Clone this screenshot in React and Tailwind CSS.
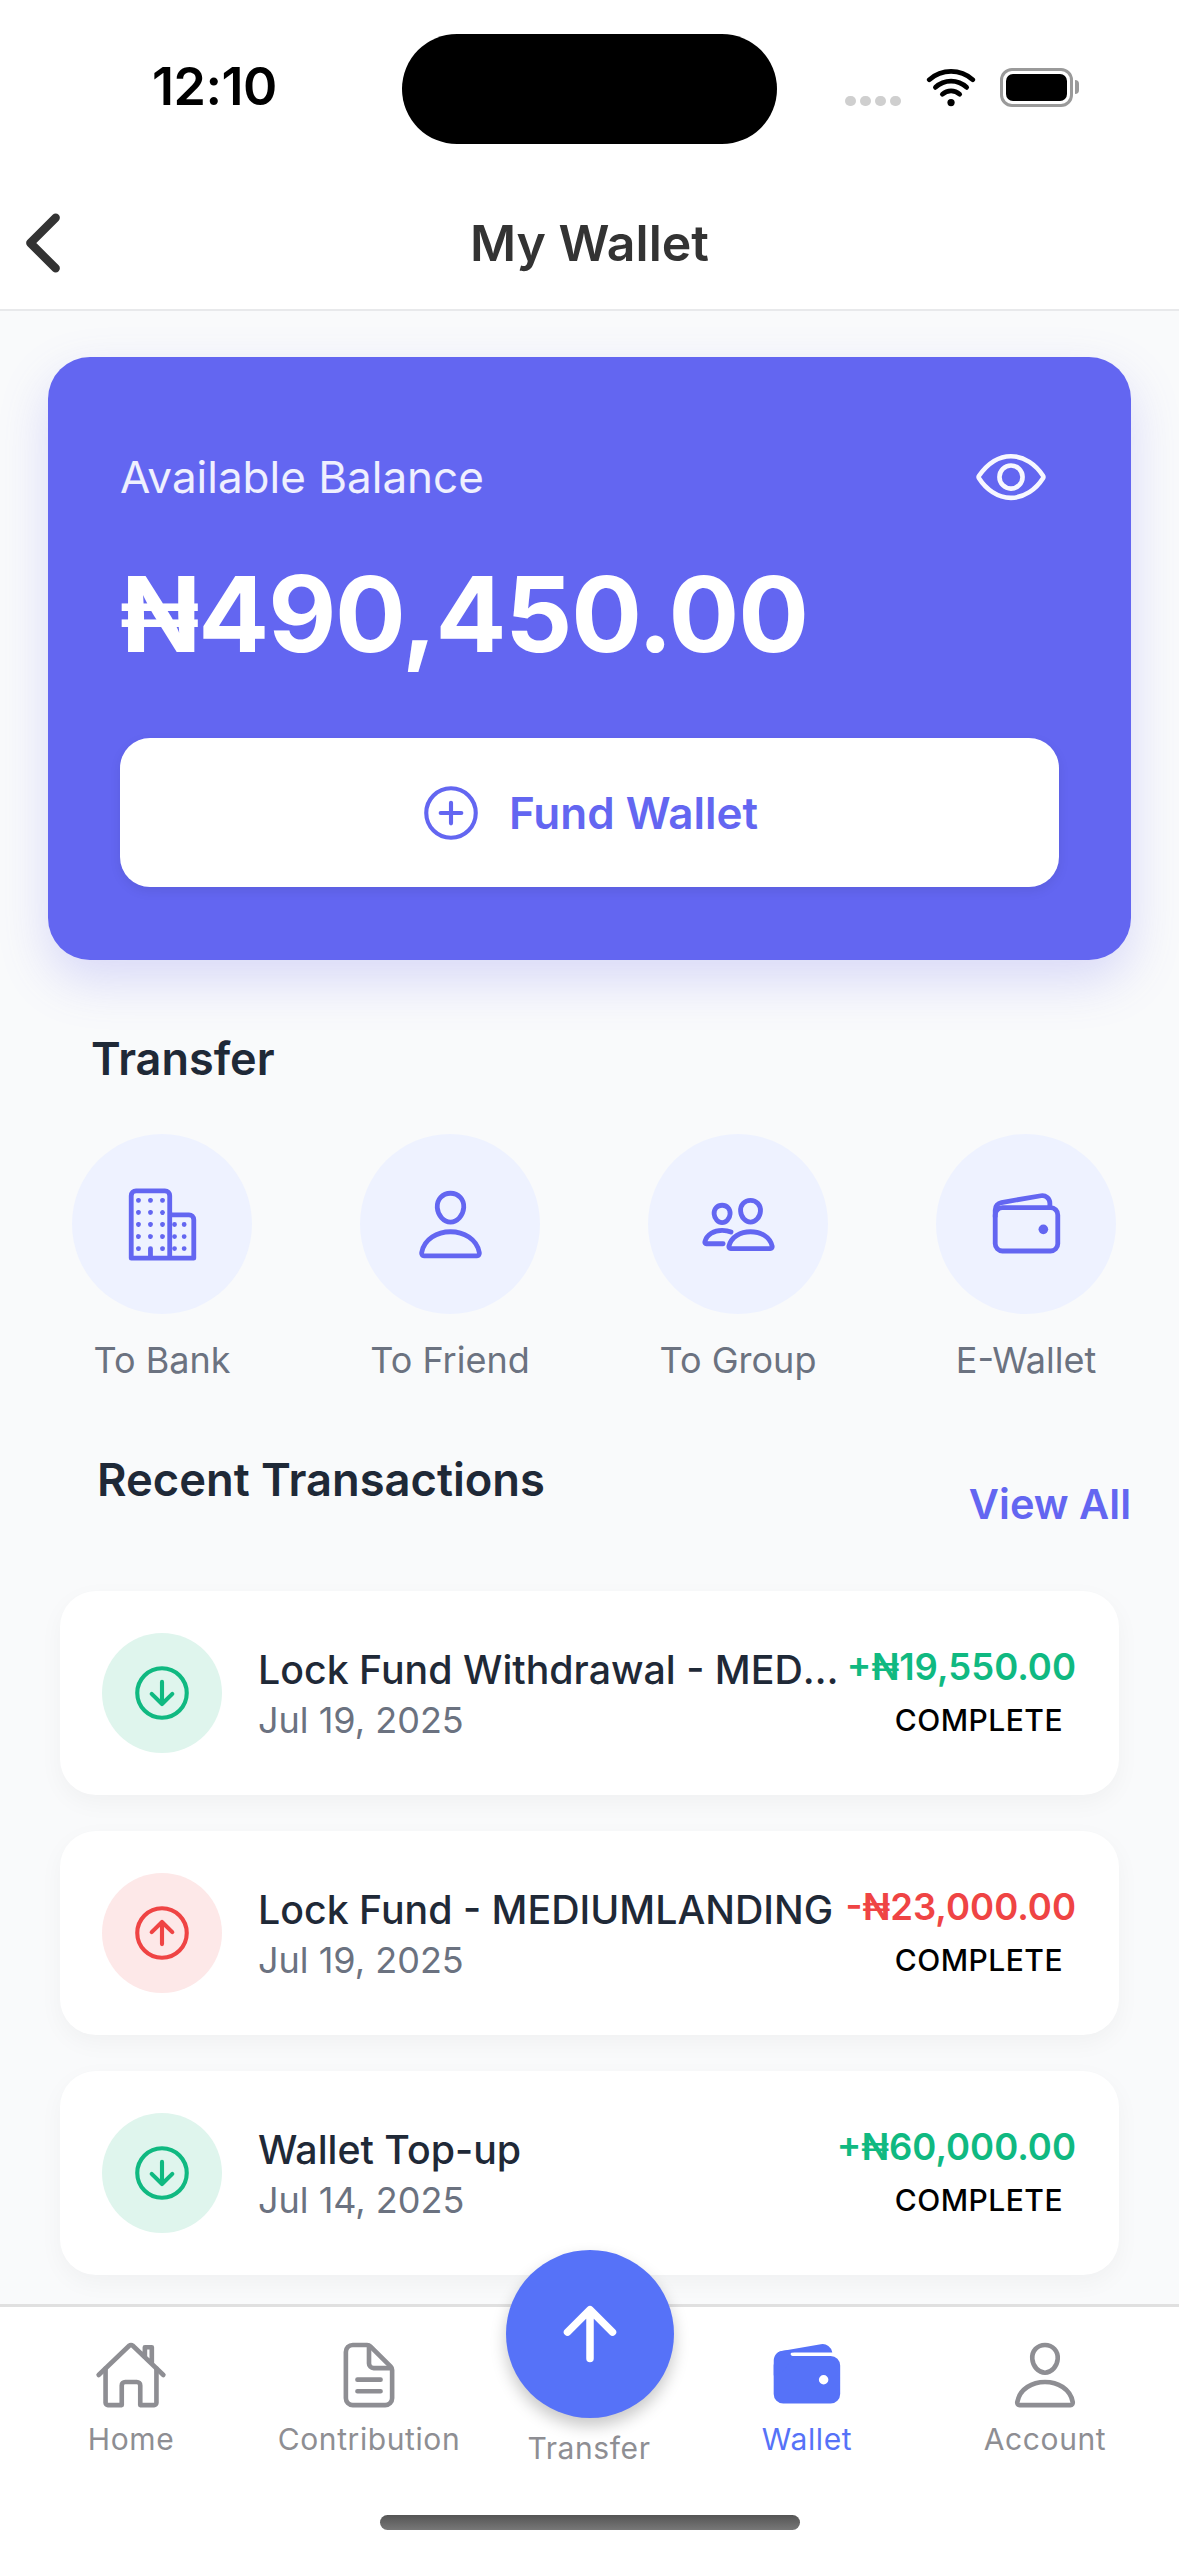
import React from 'react';
import {
  IoAddCircleOutline,
  IoArrowDownCircleOutline,
  IoArrowUp,
  IoArrowUpCircleOutline,
  IoBusinessOutline,
  IoChevronBack,
  IoDocumentTextOutline,
  IoEyeOutline,
  IoHomeOutline,
  IoPeopleOutline,
  IoPersonOutline,
  IoWallet,
  IoWalletOutline,
  IoWifi,
} from 'react-icons/io5';

const TRANSFERS = [
  { label: 'To Bank', icon: IoBusinessOutline },
  { label: 'To Friend', icon: IoPersonOutline },
  { label: 'To Group', icon: IoPeopleOutline },
  { label: 'E-Wallet', icon: IoWalletOutline },
];

const TRANSACTIONS = [
  { title: 'Lock Fund Withdrawal - MEDIUMLANDING', date: 'Jul 19, 2025', amount: '+₦19,550.00', credit: true },
  { title: 'Lock Fund - MEDIUMLANDING', date: 'Jul 19, 2025', amount: '-₦23,000.00', credit: false },
  { title: 'Wallet Top-up', date: 'Jul 14, 2025', amount: '+₦60,000.00', credit: true },
];

const StatusBar = () => (
  <div className="h-[170px] shrink-0 bg-white flex items-center relative">
    <span className="ml-[152px] mt-[4px] text-[52px] font-semibold text-black tracking-[-0.5px]">12:10</span>
    <div className="absolute left-[402px] top-[34px] w-[375px] h-[110px] bg-black rounded-full"></div>
    <div className="absolute left-[845px] top-[96px] flex gap-[4px]">
      {[0, 1, 2, 3].map((i) => (
        <div key={i} className="w-[11px] h-[10px] rounded-full bg-[#cfcfcf]"></div>
      ))}
    </div>
    <IoWifi className="absolute left-[922px] top-[58px] text-black" size={58} />
    <div className="absolute left-[1000px] top-[68px] w-[73px] h-[39px] rounded-[12px] border-[3px] border-[#9a9a9a] p-[3px]">
      <div className="w-full h-full rounded-[7px] bg-black"></div>
    </div>
    <div className="absolute left-[1075px] top-[80px] w-[4px] h-[14px] rounded-r-full bg-[#9a9a9a]"></div>
  </div>
);

const Header = () => (
  <div className="h-[141px] shrink-0 bg-white border-b-[2px] border-[#e8e9eb] relative flex items-center justify-center">
    <IoChevronBack className="absolute left-[-2px] top-[28px] text-[#333333]" size={90} />
    <h1 className="text-[50px] font-semibold text-[#333333] mt-[7px]">My Wallet</h1>
  </div>
);

const BalanceCard = () => (
  <div className="mx-[48px] mt-[46px] h-[603px] rounded-[42px] bg-[#6366f1] px-[72px] pt-[93px] shadow-[0_20px_50px_rgba(99,102,241,0.22)]">
    <div className="flex items-center justify-between h-[54px]">
      <span className="text-[44px] text-white/90">Available Balance</span>
      <IoEyeOutline className="text-white/95 mr-[11px]" size={74} />
    </div>
    <div className="mt-[50px] text-[105px] leading-[120px] font-bold text-white tracking-[-1.2px]">₦490,450.00</div>
    <button className="mt-[64px] w-full h-[149px] rounded-[30px] bg-white pr-[3px] flex items-center justify-center gap-[25px] shadow-[0_4px_12px_rgba(0,0,0,0.08)]">
      <IoAddCircleOutline className="text-[#6366f1]" size={66} />
      <span className="text-[44px] font-semibold text-[#6366f1]">Fund Wallet</span>
    </button>
  </div>
);

const TransferRow = () => (
  <div className="mt-[72px]">
    <h2 className="ml-[91px] text-[45px] leading-[54px] font-semibold text-[#1f2937]">Transfer</h2>
    <div className="mt-[48px] ml-[72px] grid grid-cols-[180px_180px_180px_180px] gap-x-[108px]">
      {TRANSFERS.map((item) => (
        <div key={item.label} className="flex flex-col items-center">
          <div className="w-[180px] h-[180px] rounded-full bg-[#eef2ff] flex items-center justify-center">
            <item.icon className="text-[#6366f1]" size={77} />
          </div>
          <span className="mt-[24px] text-[36px] leading-[44px] text-[#6b7280] whitespace-nowrap">{item.label}</span>
        </div>
      ))}
    </div>
  </div>
);

const TransactionCard = ({ item }) => {
  const Icon = item.credit ? IoArrowDownCircleOutline : IoArrowUpCircleOutline;
  return (
    <div className="h-[204px] rounded-[36px] bg-white pl-[42px] pr-[43px] flex items-center shadow-[0_8px_24px_rgba(0,0,0,0.04)]">
      <div className={`w-[120px] h-[120px] shrink-0 rounded-full flex items-center justify-center ${item.credit ? 'bg-[#dff5ed]' : 'bg-[#fde8e8]'}`}>
        <Icon className={item.credit ? 'text-[#10b981]' : 'text-[#ef4444]'} size={66} />
      </div>
      <div className="ml-[36px] w-[582px] shrink-0 mt-[2px]">
        <div className="text-[39.3px] leading-[48px] font-medium text-[#1f2937] truncate">{item.title}</div>
        <div className="mt-[4px] text-[36px] leading-[44px] text-[#6b7280]">{item.date}</div>
      </div>
      <div className="flex-1 min-w-0 flex flex-col items-end whitespace-nowrap mb-[3px]">
        <span className={`text-[36.5px] leading-[48px] font-semibold ${item.credit ? 'text-[#10b981]' : 'text-[#ef4444]'}`}>{item.amount}</span>
        <span className="mt-[9px] mr-[13px] text-[30px] leading-[40px] font-medium text-black tracking-[0.5px]">COMPLETE</span>
      </div>
    </div>
  );
};

const Transactions = () => (
  <div className="mt-[71px]">
    <div className="flex justify-between pl-[97px] pr-[48px]">
      <h2 className="text-[45.3px] leading-[54px] font-semibold text-[#1f2937]">Recent Transactions</h2>
      <a href="#" className="mt-[24px] text-[41.5px] leading-[54px] font-semibold text-[#6366f1]">View All</a>
    </div>
    <div className="mt-[60px] mx-[60px] flex flex-col gap-[36px]">
      {TRANSACTIONS.map((item) => (
        <TransactionCard key={item.title} item={item} />
      ))}
    </div>
  </div>
);

const NavItem = ({ icon: Icon, label, active, size = 74 }) => (
  <div className="w-[238px] flex flex-col items-center">
    <div className="h-[80px] flex items-center justify-center">
      <Icon className={active ? 'text-[#5672f8]' : 'text-[#8e8e93]'} size={size} />
    </div>
    <span className={`mt-[6px] text-[30px] leading-[36px] font-normal tracking-[0.6px] whitespace-nowrap ${active ? 'text-[#5672f8]' : 'text-[#8e8e93]'}`}>{label}</span>
  </div>
);

const BottomNav = () => (
  <div className="absolute left-0 right-0 bottom-0 h-[252px] bg-white border-t-[3px] border-[#e0e0e0]">
    <div className="flex pt-[28px] pl-[12px]">
      <NavItem icon={IoHomeOutline} label="Home" />
      <NavItem icon={IoDocumentTextOutline} label="Contribution" />
      <div className="w-[200px]"></div>
      <NavItem icon={IoWallet} label="Wallet" active size={76} />
      <NavItem icon={IoPersonOutline} label="Account" />
    </div>
    <div className="absolute left-[380px] top-[208px] w-[420px] h-[15px] rounded-full bg-gradient-to-b from-[#555555] to-[#777777]"></div>
  </div>
);

const TransferFab = () => (
  <div className="absolute left-[490px] top-[2250px] w-[200px] flex flex-col items-center">
    <div className="w-[168px] h-[168px] rounded-full bg-[#5672f8] flex items-center justify-center shadow-[0_8px_16px_rgba(0,0,0,0.22)]">
      <IoArrowUp className="text-white" size={80} />
    </div>
    <span className="mt-[12px] mr-[2px] text-[30px] leading-[36px] font-normal tracking-[0.6px] text-[#8e8e93]">Transfer</span>
  </div>
);

const App = () => {
  return (
    <div className="w-[1179px] h-[2556px] relative overflow-hidden bg-[#f9fafb] font-['Inter',sans-serif]">
      <StatusBar />
      <Header />
      <BalanceCard />
      <TransferRow />
      <Transactions />
      <BottomNav />
      <TransferFab />
    </div>
  );
};

export default App;
